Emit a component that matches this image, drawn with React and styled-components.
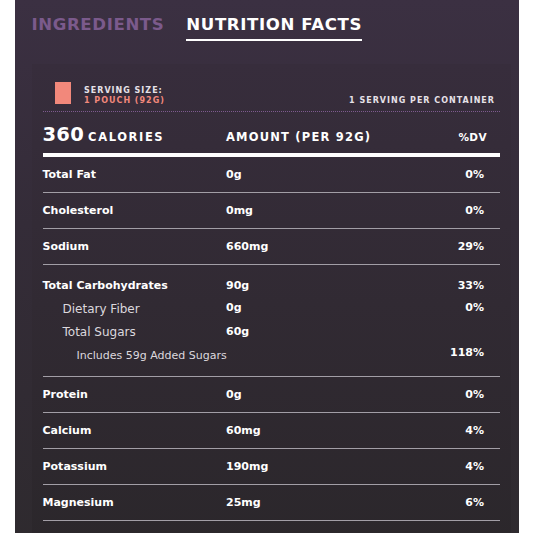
import React from "react";
import styled, { createGlobalStyle } from "styled-components";

const Global = createGlobalStyle`
  html, body { margin: 0; padding: 0; background: #ffffff; }
  body { font-family: "DejaVu Sans", "Noto Sans", sans-serif; }
`;

const Outer = styled.div`
  margin-left: 15px;
  width: 504px;
  min-height: 560px;
  box-sizing: border-box;
  padding: 0 8px 0 16.5px;
  background: linear-gradient(180deg, #3b3042 0%, #342c38 40%, #2e2a2e 100%);
`;

const Tabs = styled.div`
  display: flex;
  gap: 22px;
  height: 64px;
  padding-top: 15px;
  box-sizing: border-box;
`;

const Tab = styled.div`
  font-family: "DejaVu Sans", sans-serif;
  font-weight: 700;
  font-size: 16.6px;
  line-height: 20px;
  letter-spacing: 0.6px;
  height: 26px;
  box-sizing: border-box;
  color: ${(p) => (p.$active ? "#ffffff" : "#7b5a8c")};
  border-bottom: ${(p) => (p.$active ? "2px solid #ffffff" : "2px solid transparent")};
`;

const Panel = styled.div`
  background: linear-gradient(180deg, #372d3c 0%, #312a33 50%, #2b272b 100%);
  padding: 0 11px;
  min-height: 480px;
`;

const Serving = styled.div`
  display: flex;
  align-items: flex-end;
  padding: 18px 5px 7px 12.5px;
  border-bottom: 1.5px dotted #7d5a8e;
`;

const Pouch = styled.div`
  width: 16px;
  height: 22px;
  background: #f2887b;
  margin-right: 13px;
`;

const ServingText = styled.div`
  display: flex;
  flex-direction: column;
  font-size: 8px;
  font-weight: 700;
  letter-spacing: 1px;
  line-height: 9.5px;
  margin-bottom: -1px;
`;

const Small = styled.span`
  color: ${(p) => (p.$accent ? "#f2887b" : "#e6e1e8")};
`;

const PerContainer = styled.div`
  margin-left: auto;
  font-size: 8px;
  font-weight: 700;
  letter-spacing: 1px;
  color: #e6e1e8;
  line-height: 9.5px;
  margin-bottom: -1px;
`;

const HeaderRow = styled.div`
  display: grid;
  grid-template-columns: 183.5px 1fr auto;
  align-items: baseline;
  line-height: 22px;
  padding: 11.5px 13px 5.5px 0;
  border-bottom: 4px solid #ffffff;
  color: #ffffff;
  font-weight: 700;
`;

const Calories = styled.div`
  display: flex;
  align-items: baseline;
  gap: 4px;
`;

const Big = styled.span`
  font-size: 19.5px;
  letter-spacing: 0.3px;
`;

const Caps = styled.span`
  font-size: ${(p) => p.$size || 11.5}px;
  letter-spacing: ${(p) => p.$ls || 1.6}px;
`;

const Row = styled.div`
  display: grid;
  grid-template-columns: 183.5px 1fr auto;
  align-items: center;
  height: 35px;
  padding-right: 16px;
  border-bottom: 1px solid #a29ea6;
  color: #ffffff;
  font-size: 11px;
  font-weight: 700;
`;

const Group = styled.div`
  padding: 8.8px 16px 9px 0;
  border-bottom: 1px solid #a29ea6;
`;

const SubRow = styled.div`
  display: grid;
  grid-template-columns: 183.5px 1fr auto;
  align-items: center;
  height: 23.3px;
  color: #ffffff;
  font-size: 11px;
  font-weight: 700;
`;

const SubLabel = styled.span`
  padding-left: ${(p) => p.$indent}px;
  font-weight: 400;
  font-size: ${(p) => p.$size}px;
  color: #dcd8de;
  white-space: nowrap;
`;

const Value = styled.span`
  transform: translateY(${(p) => p.$shift || 0}px);
`;

const Dv = styled.span`
  text-align: right;
  transform: translateY(${(p) => p.$shift || 0}px);
`;

const rowsA = [
  ["Total Fat", "0g", "0%"],
  ["Cholesterol", "0mg", "0%"],
  ["Sodium", "660mg", "29%"],
];
const rowsB = [
  ["Protein", "0g", "0%"],
  ["Calcium", "60mg", "4%"],
  ["Potassium", "190mg", "4%"],
  ["Magnesium", "25mg", "6%"],
];

export default function App() {
  return (
    <>
      <Global />
      <Outer>
        <Tabs>
          <Tab>INGREDIENTS</Tab>
          <Tab $active>NUTRITION FACTS</Tab>
        </Tabs>
        <Panel>
          <Serving>
            <Pouch />
            <ServingText>
              <Small>SERVING SIZE:</Small>
              <Small $accent>1 POUCH (92G)</Small>
            </ServingText>
            <PerContainer>1 SERVING PER CONTAINER</PerContainer>
          </Serving>
          <HeaderRow>
            <Calories>
              <Big>360</Big>
              <Caps>CALORIES</Caps>
            </Calories>
            <Caps $ls={1.2}>AMOUNT (PER 92G)</Caps>
            <Caps $ls={0.4} $size={10.5}>%DV</Caps>
          </HeaderRow>
          {rowsA.map(([n, a, d]) => (
            <Row key={n}>
              <span>{n}</span>
              <span>{a}</span>
              <Dv>{d}</Dv>
            </Row>
          ))}
          <Group>
            <SubRow>
              <span>Total Carbohydrates</span>
              <span>90g</span>
              <Dv>33%</Dv>
            </SubRow>
            <SubRow>
              <SubLabel $indent={20} $size={12}>Dietary Fiber</SubLabel>
              <Value $shift={-1.5}>0g</Value>
              <Dv $shift={-1.5}>0%</Dv>
            </SubRow>
            <SubRow>
              <SubLabel $indent={20} $size={12}>Total Sugars</SubLabel>
              <Value $shift={-1.5}>60g</Value>
              <Dv />
            </SubRow>
            <SubRow>
              <SubLabel $indent={34} $size={11}>Includes 59g Added Sugars</SubLabel>
              <span />
              <Dv $shift={-3}>118%</Dv>
            </SubRow>
          </Group>
          {rowsB.map(([n, a, d]) => (
            <Row key={n}>
              <span>{n}</span>
              <span>{a}</span>
              <Dv>{d}</Dv>
            </Row>
          ))}
        </Panel>
      </Outer>
    </>
  );
}
